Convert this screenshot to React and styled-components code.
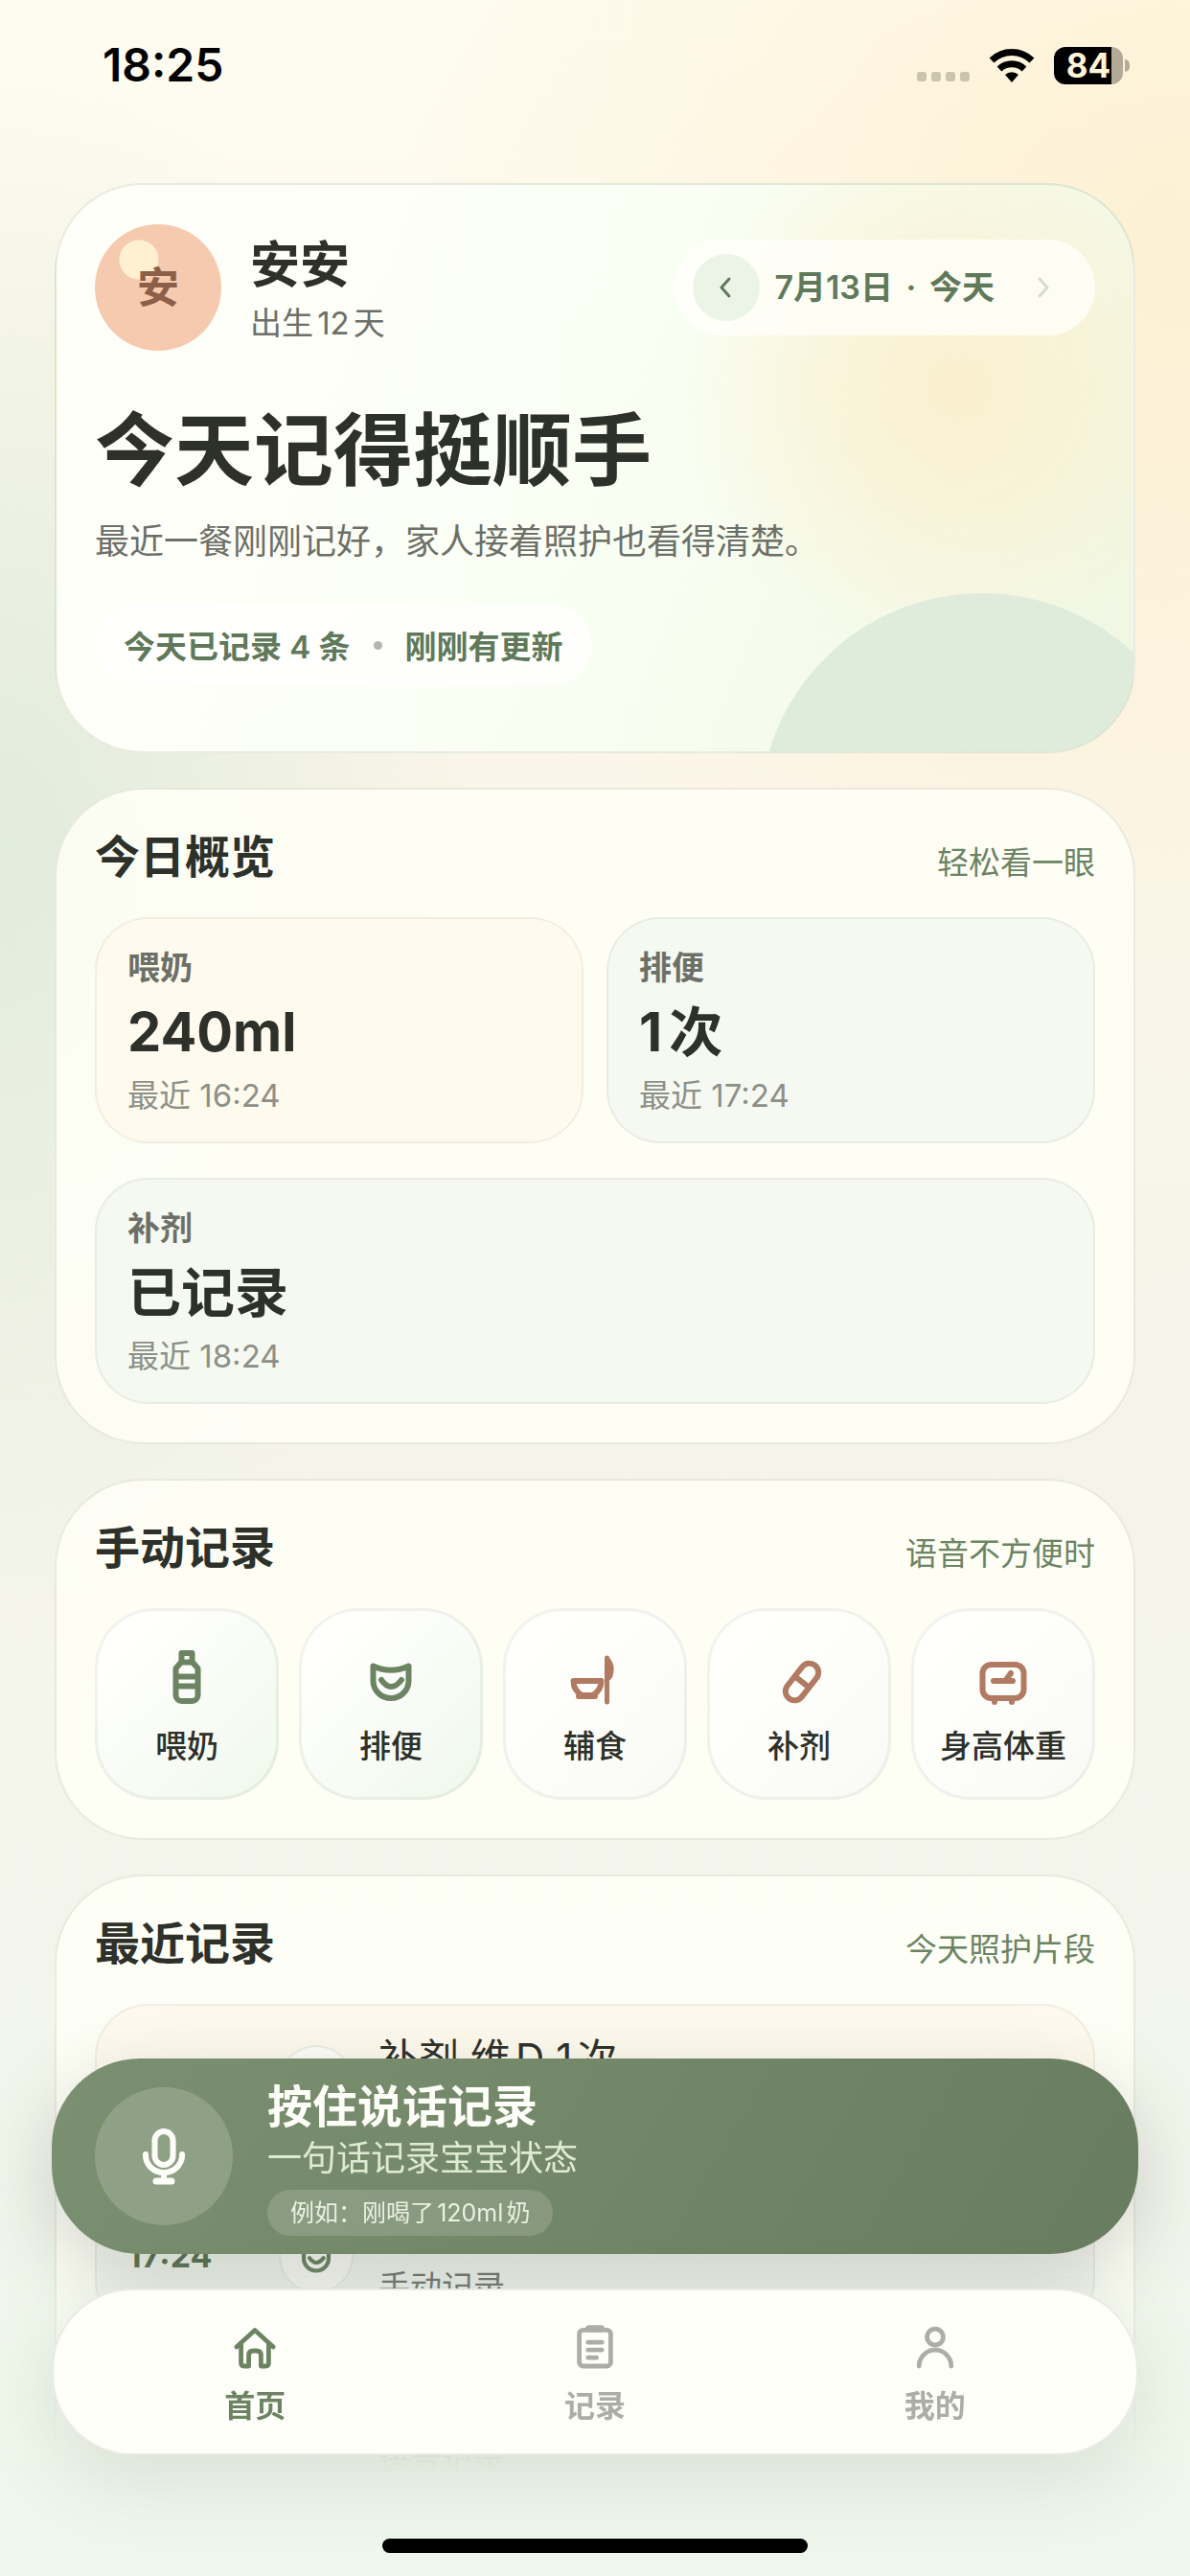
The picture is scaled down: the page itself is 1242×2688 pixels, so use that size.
import React from 'react'
import styled, { createGlobalStyle } from 'styled-components'

const GlobalStyle = createGlobalStyle`
  *, *::before, *::after {
    box-sizing: border-box;
  }

  body {
    margin: 0;
    font-family: Inter, "Noto Sans CJK SC", sans-serif;
    color: #2e302a;
    text-autospace: normal;
    background: #eff7ec;
  }

  button {
    font: inherit;
    color: inherit;
    border: 0;
    padding: 0;
    background: none;
    cursor: pointer;
  }

  h1, h2, p {
    margin: 0;
  }
`

const Screen = styled.div`
  position: relative;
  min-height: 100vh;
  padding: 0 57px;
  overflow: hidden;
  background:
    radial-gradient(820px 800px at 100% 260px, rgba(253, 238, 204, 0.8), rgba(253, 241, 218, 0) 100%),
    radial-gradient(520px 800px at 0 880px, rgba(222, 235, 218, 0.9), rgba(227, 238, 222, 0) 100%),
    linear-gradient(180deg, #fefcf0 0, #fcf6e9 700px, #f5f4ea 1500px, #f3f5ec 2000px, #eff7ec 100%);
`

const StatusBar = styled.header`
  display: flex;
  align-items: center;
  justify-content: space-between;
  height: 132px;
  margin-bottom: 59px;
  padding: 4px 6px 0 50px;
  color: #000;
`

const Clock = styled.time`
  font-size: 48px;
  line-height: 56px;
  font-weight: 600;
`

const StatusIcons = styled.div`
  display: flex;
  align-items: center;
  gap: 20px;
`

const SignalDots = styled.div`
  display: flex;
  align-self: flex-end;
  gap: 5px;
  padding-bottom: 3px;

  span {
    width: 10px;
    height: 10px;
    border-radius: 3px;
    background: #cbc4ae;
  }
`

const Battery = styled.div`
  display: flex;
  align-items: center;
  gap: 2px;

  &::after {
    content: '';
    width: 5px;
    height: 13px;
    border-radius: 0 5px 5px 0;
    background: #b3ad9c;
  }
`

const BatteryLevel = styled.div`
  width: 72px;
  height: 39px;
  border-radius: 12px;
  background: linear-gradient(90deg, #000 84%, #b0aa96 84%);
  color: #fff3d8;
  font-size: 35px;
  line-height: 39px;
  font-weight: 700;
  text-align: center;
`

const Stack = styled.main`
  display: flex;
  flex-direction: column;
  gap: 36px;
`

const Card = styled.section`
  position: relative;
  padding: 40px;
  border: 2px solid rgba(90, 100, 80, 0.13);
  border-radius: 92px;
  background: rgba(255, 255, 247, 0.84);
`

const HeroCard = styled(Card)`
  height: 595px;
  padding-top: 41px;
  overflow: hidden;
  background:
    radial-gradient(circle at 940px 210px, rgba(251, 238, 202, 0.85) 0, rgba(251, 239, 206, 0.6) 130px, rgba(251, 240, 208, 0) 290px),
    linear-gradient(112deg, #fffffa 10%, #fafff4 50%, #eff7e2 100%);

  &::after {
    content: '';
    position: absolute;
    top: 426px;
    right: -74px;
    width: 464px;
    height: 464px;
    border-radius: 50%;
    background: #dfebdb;
  }
`

const HeroTop = styled.div`
  display: flex;
  align-items: center;
  justify-content: space-between;
`

const Profile = styled.div`
  display: flex;
  align-items: center;
  gap: 30px;
`

const Avatar = styled.div`
  display: grid;
  place-items: center;
  width: 132px;
  height: 132px;
  border-radius: 50%;
  background: radial-gradient(circle at 46px 37px, #fff0d2 20px, #f6caae 21px);
  color: #8c6048;
  font-size: 44px;
  line-height: 60px;
  font-weight: 600;
`

const ProfileText = styled.div`
  padding-top: 8px;
`

const BabyName = styled.h2`
  font-size: 52px;
  line-height: 60px;
  font-weight: 700;
`

const BabyAge = styled.p`
  margin-top: 6px;
  font-size: 33px;
  line-height: 48px;
  color: #6d7068;
`

const DateSwitch = styled.div`
  display: flex;
  align-items: center;
  height: 100px;
  padding: 0 20px;
  gap: 15px;
  border-radius: 50px;
  background: rgba(255, 255, 250, 0.8);
  color: #60795a;
  font-size: 34px;
  line-height: 48px;
  font-weight: 600;
  text-autospace: no-autospace;
`

const DateDot = styled.span`
  padding: 0 5px;
`

const DateArrow = styled.button`
  display: grid;
  place-items: center;
  width: 70px;
  height: 70px;
  border-radius: 50%;
  background: ${({ $active }) => ($active ? '#ecf4e8' : 'transparent')};

  &:disabled {
    opacity: 0.25;
    cursor: default;
  }
`

const HeroTitle = styled.h1`
  margin-top: 45px;
  font-size: 83px;
  line-height: 118px;
  font-weight: 700;
`

const HeroText = styled.p`
  margin-top: 12px;
  font-size: 36px;
  line-height: 48px;
  color: #6d7068;
`

const HeroPill = styled.p`
  display: inline-flex;
  align-items: center;
  gap: 24px;
  height: 84px;
  margin-top: 42px;
  padding: 0 30px;
  border-radius: 42px;
  background: rgba(255, 255, 255, 0.8);
  color: #60795a;
  font-size: 33px;
  font-weight: 600;

  i {
    width: 9px;
    height: 9px;
    border-radius: 50%;
    background: #b3b6ae;
  }
`

const CardHeader = styled.div`
  display: flex;
  align-items: flex-end;
  justify-content: space-between;
  height: 60px;
  margin-bottom: 33px;

  h2 {
    font-size: 47px;
    line-height: 60px;
    font-weight: 700;
  }

  p {
    font-size: 33px;
    line-height: 48px;
    color: #6b8463;
  }
`

const StatGrid = styled.div`
  display: grid;
  grid-template-columns: 1fr 1fr;
  gap: 36px 24px;
`

const Stat = styled.div`
  grid-column: ${({ $wide }) => ($wide ? '1 / -1' : 'auto')};
  height: 236px;
  padding: 25px 32px;
  border: 2px solid rgba(90, 100, 80, 0.08);
  border-radius: 56px;
  background: ${({ $tone }) => ($tone === 'cream' ? '#fffaee' : '#f5f9f1')};
`

const StatLabel = styled.p`
  font-size: 34px;
  line-height: 51px;
  font-weight: 600;
  color: #6d7068;
`

const StatValue = styled.p`
  font-size: 56px;
  line-height: 84px;
  font-weight: 700;
`

const StatMeta = styled.p`
  font-size: 33px;
  line-height: 48px;
  color: #8d9088;
`

const ActionGrid = styled.div`
  display: grid;
  grid-template-columns: repeat(5, 1fr);
  gap: 21px;
`

const Action = styled.button`
  display: flex;
  flex-direction: column;
  align-items: center;
  height: 200px;
  padding-top: 39px;
  border: 3px solid rgba(90, 100, 80, 0.08);
  border-radius: 62px;
  background: linear-gradient(135deg, #fffffc 20%, ${({ $tone }) => ($tone === 'green' ? '#eff8ec' : '#f9faf5')} 100%);
  background-origin: border-box;
  color: #2e302a;
  font-size: 33px;
  line-height: 48px;
  font-weight: 500;

  svg {
    margin-bottom: 18px;
    color: ${({ $tone }) => ($tone === 'green' ? '#6c8462' : '#b17a62')};
  }
`

const RecordList = styled.ul`
  display: flex;
  flex-direction: column;
  gap: 18px;
  margin: 0;
  padding: 0;
  list-style: none;
`

const Record = styled.li`
  display: grid;
  grid-template-columns: 132px 78px 1fr;
  align-items: center;
  column-gap: 26px;
  height: 163px;
  padding: 0 32px;
  border: 2px solid rgba(90, 100, 80, 0.08);
  border-radius: 56px;
  background: ${({ $tone }) => ($tone === 'cream' ? '#fffaee' : '#f5f9f1')};
`

const RecordTime = styled.time`
  font-size: 34px;
  font-weight: 700;
  color: #5b7355;
`

const RecordIcon = styled.div`
  display: grid;
  place-items: center;
  width: 78px;
  height: 78px;
  border: 2px solid rgba(90, 100, 80, 0.1);
  border-radius: 50%;
  background: #fffffa;
  color: ${({ $tone }) => ($tone === 'cream' ? '#b17a62' : '#6c8462')};
`

const RecordText = styled.div`
  padding-top: 5px;
`

const RecordTitle = styled.p`
  font-size: 42px;
  line-height: 54px;
  font-weight: 400;
`

const RecordSource = styled.p`
  margin-top: 6px;
  font-size: 33px;
  line-height: 48px;
  color: #6d7068;
`

const BottomFade = styled.div`
  position: fixed;
  left: 0;
  right: 0;
  bottom: 0;
  height: 330px;
  background: linear-gradient(180deg, rgba(239, 247, 236, 0) 0, rgba(239, 247, 236, 0.88) 190px, #eff7ec 222px);
`

const Dock = styled.div`
  position: fixed;
  left: 54px;
  right: 54px;
  bottom: 24px;
  display: flex;
  flex-direction: column;
  align-items: center;
`

const VoiceButton = styled.button`
  display: flex;
  align-items: center;
  gap: 36px;
  width: 100%;
  height: 204px;
  margin-bottom: 36px;
  padding: 0 45px;
  border-radius: 92px;
  background: linear-gradient(120deg, #7a9070 0, #728767 50%, #687c60 100%);
  box-shadow: 0 24px 80px rgba(70, 80, 70, 0.24);
  color: #fffffa;
  text-align: left;
`

const MicCircle = styled.span`
  display: grid;
  place-items: center;
  width: 144px;
  height: 144px;
  border-radius: 50%;
  background: rgba(255, 255, 255, 0.17);
`

const VoiceText = styled.span`
  display: flex;
  flex-direction: column;
  align-items: flex-start;

  strong {
    font-size: 47px;
    line-height: 60px;
    font-weight: 700;
  }

  span {
    font-size: 36px;
    line-height: 48px;
    color: #dfead5;
  }

  small {
    height: 48px;
    margin-top: 9px;
    padding: 0 24px;
    border-radius: 24px;
    background: rgba(255, 255, 255, 0.15);
    color: #eaf0e2;
    font-size: 25px;
    line-height: 48px;
  }
`

const TabBar = styled.nav`
  display: grid;
  grid-template-columns: repeat(3, 1fr);
  width: 100%;
  height: 174px;
  margin-bottom: 87px;
  padding: 0 33px;
  border: 2px solid rgba(90, 100, 80, 0.13);
  border-radius: 84px;
  background: #fffffa;
  box-shadow: 0 24px 80px rgba(70, 90, 70, 0.14);
`

const Tab = styled.a`
  display: flex;
  flex-direction: column;
  align-items: center;
  gap: 14px;
  padding-top: 35px;
  color: ${({ $active }) => ($active ? '#6c8462' : '#adada8')};
  font-size: 32px;
  line-height: 48px;
  font-weight: 600;
  text-decoration: none;
`

const HomeIndicator = styled.div`
  width: 444px;
  height: 15px;
  border-radius: 8px;
  background: #000;
`

const Icon = ({ size = 60, width = 6, children }) => (
  <svg
    width={size}
    height={size}
    viewBox="0 0 60 60"
    fill="none"
    stroke="currentColor"
    strokeWidth={width}
    strokeLinecap="round"
    strokeLinejoin="round"
    aria-hidden="true"
  >
    {children}
  </svg>
)

const BottleIcon = (props) => (
  <Icon {...props}>
    <path d="M24.500 5h11v9l6 7v28a6 6 0 0 1-6 6h-11a6 6 0 0 1-6-6V21l6-7z" />
    <path d="M24.500 14.500h11M19 29.500h22M19 39.500h22" />
  </Icon>
)

const DiaperIcon = (props) => (
  <Icon {...props}>
    <path d="M11.500 18.500q18.500 8.500 37 0V34a18.500 18 0 0 1-37 0z" />
    <path d="M20 33q10 14 21 0" />
  </Icon>
)

const BowlIcon = () => (
  <Icon>
    <path d="M7.500 34h29q0 10-9 15H16.500q-9-5-9-15z" />
    <path d="M13 50h17" />
    <path d="M42.500 10v46" strokeWidth="5" />
    <path d="M42.500 10q6 6 5 14t-5 8z" fill="currentColor" strokeWidth="4" />
  </Icon>
)

const PillIcon = (props) => (
  <Icon {...props}>
    <g transform="rotate(38 33 35)">
      <rect x="23.500" y="13" width="19" height="44" rx="9.500" />
      <path d="M24 35h18" />
    </g>
  </Icon>
)

const ScaleIcon = () => (
  <Icon>
    <rect x="8.500" y="17" width="43" height="35" rx="9" />
    <path d="M20 34h20M33 33l5-7M21 54v2M39 54v2" />
  </Icon>
)

const MicIcon = () => (
  <Icon>
    <rect x="20.500" y="4" width="19" height="35" rx="9.500" />
    <path d="M11 28v1a19 18 0 0 0 38 0v-1M30 48v6" />
    <path d="M22 56h16" strokeWidth="7" />
  </Icon>
)

const HomeIcon = () => (
  <Icon size={48}>
    <path d="M6 30L30 8l24 22M12 26v25q0 4 4 4h6V41q0-6 6-6h4q6 0 6 6v14h6q4 0 4-4V26" />
  </Icon>
)

const ListIcon = () => (
  <Icon size={48}>
    <rect x="9.500" y="8" width="41" height="47" rx="5" />
    <path d="M22 6h16" strokeWidth="9" />
    <path d="M21 24h18M21 34h18M21 44h11" />
  </Icon>
)

const UserIcon = () => (
  <Icon size={48}>
    <circle cx="30" cy="17" r="10.500" />
    <path d="M9 55a21 21 0 0 1 42 0" />
  </Icon>
)

const WifiIcon = () => (
  <svg width="48" height="36" viewBox="0 0 48 36" fill="none" stroke="#000" strokeWidth="7" aria-hidden="true">
    <path d="M3 13a30 30 0 0 1 42 0" />
    <path d="M11 22a19 19 0 0 1 26 0" />
    <path d="M24 36l-7-8a10 10 0 0 1 14 0z" fill="#000" stroke="none" />
  </svg>
)

const Chevron = ({ d }) => (
  <svg width="24" height="24" viewBox="0 0 24 24" fill="none" stroke="currentColor" strokeWidth="3" strokeLinecap="round" strokeLinejoin="round" aria-hidden="true">
    <path d={d} />
  </svg>
)

const stats = [
  { label: '喂奶', value: '240ml', meta: '最近 16:24', tone: 'cream' },
  { label: '排便', value: '1次', meta: '最近 17:24', tone: 'green' },
  { label: '补剂', value: '已记录', meta: '最近 18:24', tone: 'green', wide: true },
]

const actions = [
  { label: '喂奶', icon: BottleIcon, tone: 'green' },
  { label: '排便', icon: DiaperIcon, tone: 'green' },
  { label: '辅食', icon: BowlIcon, tone: 'clay' },
  { label: '补剂', icon: PillIcon, tone: 'clay' },
  { label: '身高体重', icon: ScaleIcon, tone: 'clay' },
]

const records = [
  { time: '18:24', title: '补剂 维D 1次', source: '手动记录', icon: PillIcon, tone: 'cream' },
  { time: '17:24', title: '排便 1次', source: '手动记录', icon: DiaperIcon, tone: 'green' },
  { time: '16:24', title: '喂奶 120ml', source: '语音记录', icon: BottleIcon, tone: 'cream' },
]

const tabs = [
  { label: '首页', icon: HomeIcon, active: true },
  { label: '记录', icon: ListIcon },
  { label: '我的', icon: UserIcon },
]

const SectionHeader = ({ title, note }) => (
  <CardHeader>
    <h2>{title}</h2>
    <p>{note}</p>
  </CardHeader>
)

const App = () => (
  <>
    <GlobalStyle />
    <Screen>
      <StatusBar>
        <Clock>18:25</Clock>
        <StatusIcons>
          <SignalDots>
            <span />
            <span />
            <span />
            <span />
          </SignalDots>
          <WifiIcon />
          <Battery>
            <BatteryLevel>84</BatteryLevel>
          </Battery>
        </StatusIcons>
      </StatusBar>

      <Stack>
        <HeroCard>
          <HeroTop>
            <Profile>
              <Avatar>安</Avatar>
              <ProfileText>
                <BabyName>安安</BabyName>
                <BabyAge>出生12天</BabyAge>
              </ProfileText>
            </Profile>
            <DateSwitch>
              <DateArrow $active aria-label="前一天">
                <Chevron d="M15 3l-8 9 8 9" />
              </DateArrow>
              <span>
                7月13日 <DateDot>·</DateDot> 今天
              </span>
              <DateArrow disabled aria-label="后一天">
                <Chevron d="M9 3l8 9-8 9" />
              </DateArrow>
            </DateSwitch>
          </HeroTop>
          <HeroTitle>今天记得挺顺手</HeroTitle>
          <HeroText>最近一餐刚刚记好，家人接着照护也看得清楚。</HeroText>
          <HeroPill>
            <span>今天已记录 4 条</span>
            <i />
            <span>刚刚有更新</span>
          </HeroPill>
        </HeroCard>

        <Card>
          <SectionHeader title="今日概览" note="轻松看一眼" />
          <StatGrid>
            {stats.map((stat) => (
              <Stat key={stat.label} $tone={stat.tone} $wide={stat.wide}>
                <StatLabel>{stat.label}</StatLabel>
                <StatValue>{stat.value}</StatValue>
                <StatMeta>{stat.meta}</StatMeta>
              </Stat>
            ))}
          </StatGrid>
        </Card>

        <Card>
          <SectionHeader title="手动记录" note="语音不方便时" />
          <ActionGrid>
            {actions.map(({ label, icon: ActionIcon, tone }) => (
              <Action key={label} $tone={tone}>
                <ActionIcon />
                {label}
              </Action>
            ))}
          </ActionGrid>
        </Card>

        <Card>
          <SectionHeader title="最近记录" note="今天照护片段" />
          <RecordList>
            {records.map(({ time, title, source, icon: EntryIcon, tone }) => (
              <Record key={time} $tone={tone}>
                <RecordTime>{time}</RecordTime>
                <RecordIcon $tone={tone}>
                  <EntryIcon size={42} />
                </RecordIcon>
                <RecordText>
                  <RecordTitle>{title}</RecordTitle>
                  <RecordSource>{source}</RecordSource>
                </RecordText>
              </Record>
            ))}
          </RecordList>
        </Card>
      </Stack>

      <BottomFade />
      <Dock>
        <VoiceButton>
          <MicCircle>
            <MicIcon />
          </MicCircle>
          <VoiceText>
            <strong>按住说话记录</strong>
            <span>一句话记录宝宝状态</span>
            <small>例如：刚喝了120ml奶</small>
          </VoiceText>
        </VoiceButton>
        <TabBar>
          {tabs.map(({ label, icon: TabIcon, active }) => (
            <Tab key={label} href="#" $active={active}>
              <TabIcon />
              {label}
            </Tab>
          ))}
        </TabBar>
        <HomeIndicator />
      </Dock>
    </Screen>
  </>
)

export default App
